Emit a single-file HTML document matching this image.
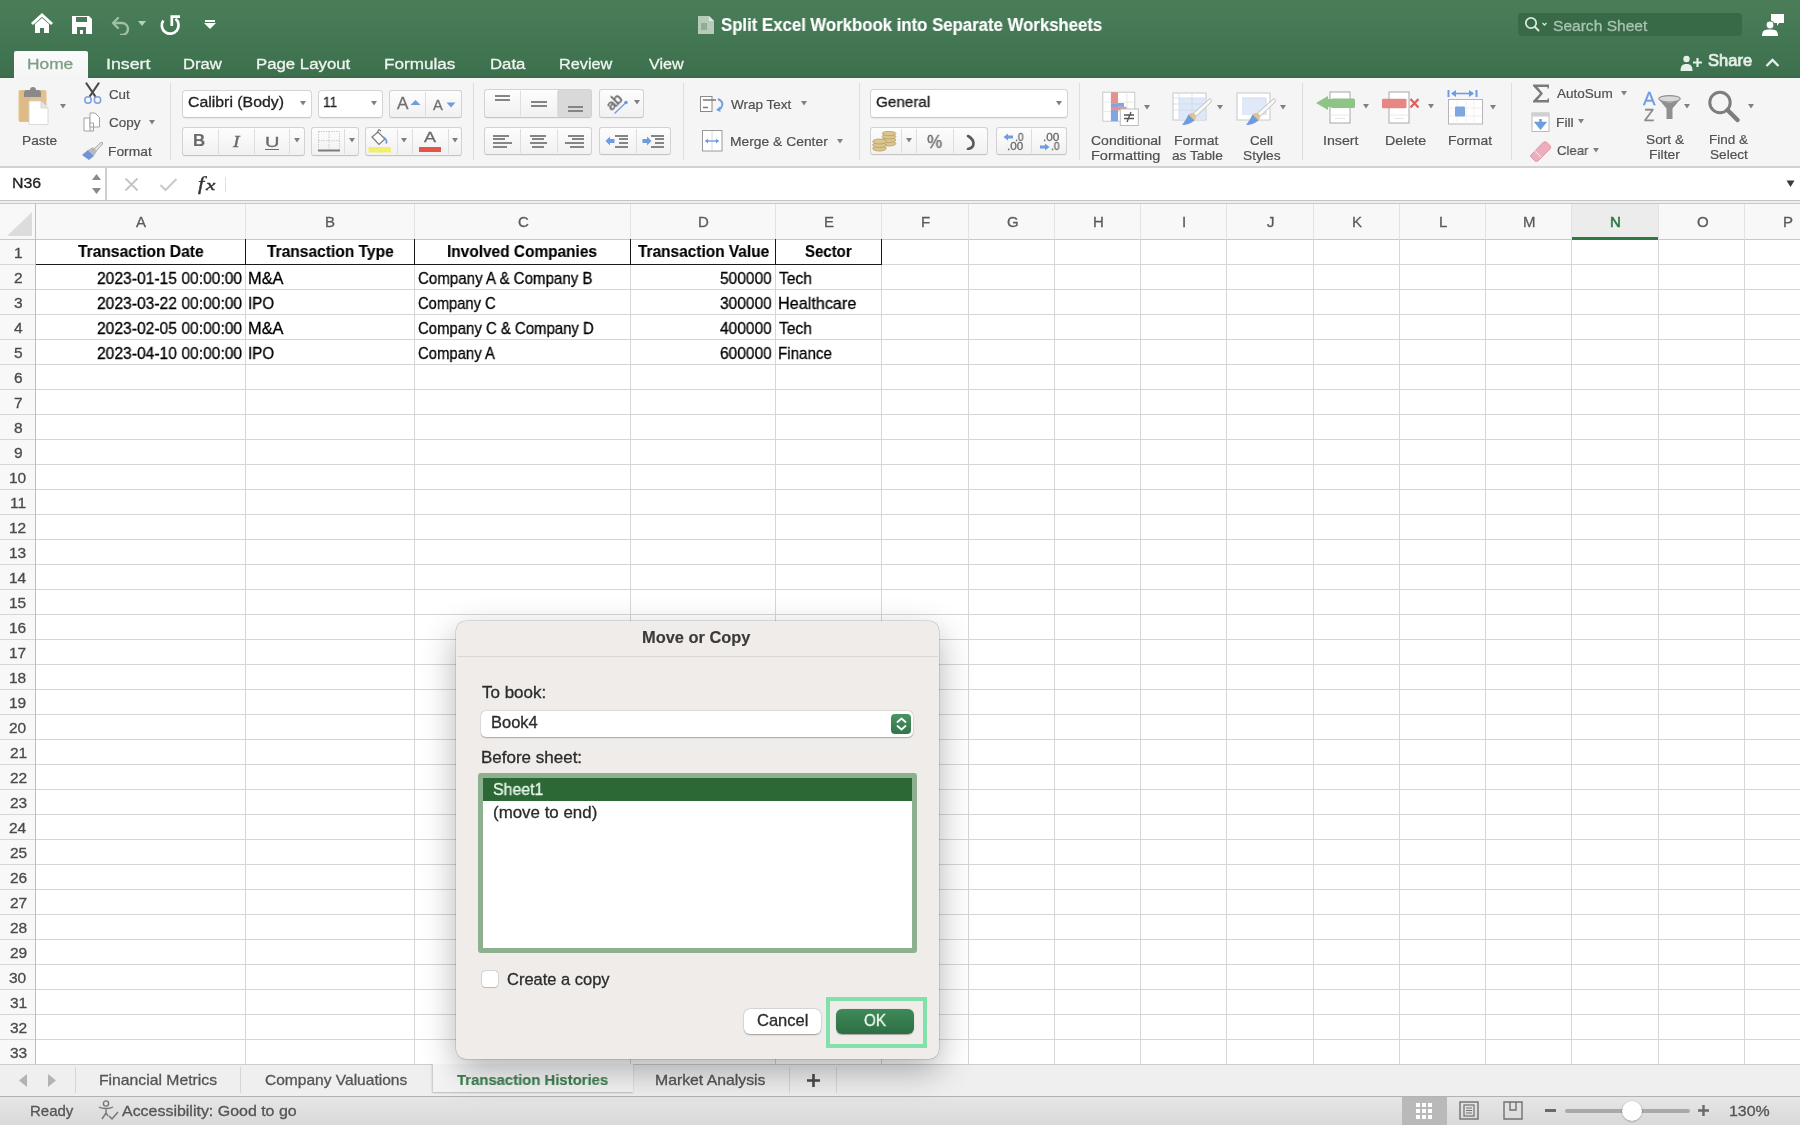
<!DOCTYPE html>
<html><head><meta charset="utf-8"><style>
html,body{margin:0;padding:0;width:1800px;height:1125px;overflow:hidden;background:#fff;font-family:"Liberation Sans",sans-serif;}
</style></head><body>
<div style="position:absolute;left:0px;top:0px;width:1800px;height:78px;background:linear-gradient(#4b7d58 0px,#457955 30px,#3d714d 74px);"></div>
<div style="position:absolute;left:0px;top:76px;width:1800px;height:2px;background:#39694a;"></div>
<svg style="position:absolute;left:30px;top:13px;" width="24" height="22" viewBox="0 0 24 22"><path d="M2 11 L12 2 L22 11" fill="none" stroke="#fff" stroke-width="3" stroke-linejoin="miter"/><path d="M5 11 L12 5 L19 11 V20 H14 V15 H10 V20 H5 Z" fill="#fff"/></svg>
<svg style="position:absolute;left:71px;top:15px;" width="22" height="20" viewBox="0 0 22 20"><path d="M1 1 H18 L21 4 V19 H1 Z" fill="#fff"/><rect x="5" y="2" width="11" height="5" fill="#487b57"/><rect x="6" y="12" width="9" height="7" fill="#487b57"/><rect x="9" y="15" width="3" height="4" fill="#fff"/></svg>
<svg style="position:absolute;left:110px;top:15px;" width="22" height="20" viewBox="0 0 22 20"><path d="M3 8 L8 3 M3 8 L8 13" stroke="#9fbfa7" stroke-width="2.4" fill="none" stroke-linecap="round"/><path d="M3 8 H12 A6 6 0 0 1 12 20 H10" stroke="#9fbfa7" stroke-width="2.4" fill="none"/></svg>
<svg style="position:absolute;left:138px;top:21px;" width="8" height="6" viewBox="0 0 8 6"><path d="M0 0 H8 L4 5 Z" fill="#b9d0bf"/></svg>
<svg style="position:absolute;left:159px;top:12px;" width="24" height="26" viewBox="0 0 24 26"><path d="M4.3 8.5 A8.4 8.4 0 1 0 16.5 6.8" stroke="#fff" stroke-width="2.7" fill="none"/><path d="M12.8 14 V4.6 H21" stroke="#fff" stroke-width="2.7" fill="none" stroke-linejoin="miter"/></svg>
<svg style="position:absolute;left:204px;top:19px;" width="12" height="11" viewBox="0 0 12 11"><rect x="1" y="1" width="10" height="2" fill="#fff"/><path d="M0 4 H12 L6 10 Z" fill="#fff"/></svg>
<svg style="position:absolute;left:697px;top:15px;" width="18" height="20" viewBox="0 0 18 20"><path d="M1 1 H12 L17 6 V19 H1 Z" fill="#b8cbbb"/><path d="M12 1 V6 H17" fill="#dfe8e0"/><rect x="4" y="8" width="6" height="7" fill="#8fae96"/></svg>
<div style="position:absolute;left:721.00px;top:15.08px;font:normal bold 17.5px 'Liberation Sans';line-height:normal;white-space:pre;will-change:transform;color:#fff;-webkit-text-stroke:0.15px #fff;transform:scaleX(0.9577);transform-origin:0 0;">Split Excel Workbook into Separate Worksheets</div>
<div style="position:absolute;left:1518px;top:13px;width:224px;height:23px;background:#386a47;border-radius:4px;"></div>
<svg style="position:absolute;left:1523px;top:15px;" width="28" height="18" viewBox="0 0 28 18"><circle cx="8" cy="8" r="5.2" stroke="#d8e6db" stroke-width="1.8" fill="none"/><path d="M11.8 11.8 L15.5 15.5" stroke="#d8e6db" stroke-width="2" stroke-linecap="round"/><path d="M19.5 8 L21.5 10 L23.5 8" stroke="#d8e6db" stroke-width="1.4" fill="none"/></svg>
<div style="position:absolute;left:1553.00px;top:16.52px;font:normal normal 15.5px 'Liberation Sans';line-height:normal;white-space:pre;will-change:transform;color:#a9c4b0;-webkit-text-stroke:0.3px #a9c4b0;transform:scaleX(1.0040);transform-origin:0 0;">Search Sheet</div>
<svg style="position:absolute;left:1761px;top:13px;" width="24" height="24" viewBox="0 0 24 24"><path d="M10 1 H23 V10 H18 L16 13 V10 H10 Z" fill="#fff"/><circle cx="9" cy="12" r="4" fill="#fff" stroke="#487b57" stroke-width="1.2"/><path d="M1 23 C1 17 4 16.5 9 16.5 C14 16.5 17 17 17 23 Z" fill="#fff"/></svg>
<div style="position:absolute;left:14px;top:51px;width:74px;height:27px;background:linear-gradient(#fbfbfb,#f5f5f5);border-radius:2px 2px 0 0;"></div>
<div style="position:absolute;left:26.88px;top:55.22px;font:normal normal 15.5px 'Liberation Sans';line-height:normal;white-space:pre;will-change:transform;color:#7c9e87;-webkit-text-stroke:0.3px #7c9e87;transform:scaleX(1.1177);transform-origin:0 0;">Home</div>
<div style="position:absolute;left:105.75px;top:55.22px;font:normal normal 15.5px 'Liberation Sans';line-height:normal;white-space:pre;will-change:transform;color:#eef5ef;-webkit-text-stroke:0.3px #eef5ef;transform:scaleX(1.1467);transform-origin:0 0;">Insert</div>
<div style="position:absolute;left:183.43px;top:55.22px;font:normal normal 15.5px 'Liberation Sans';line-height:normal;white-space:pre;will-change:transform;color:#eef5ef;-webkit-text-stroke:0.3px #eef5ef;transform:scaleX(1.0702);transform-origin:0 0;">Draw</div>
<div style="position:absolute;left:256.02px;top:55.22px;font:normal normal 15.5px 'Liberation Sans';line-height:normal;white-space:pre;will-change:transform;color:#eef5ef;-webkit-text-stroke:0.3px #eef5ef;transform:scaleX(1.0826);transform-origin:0 0;">Page Layout</div>
<div style="position:absolute;left:384.40px;top:55.22px;font:normal normal 15.5px 'Liberation Sans';line-height:normal;white-space:pre;will-change:transform;color:#eef5ef;-webkit-text-stroke:0.3px #eef5ef;transform:scaleX(1.1042);transform-origin:0 0;">Formulas</div>
<div style="position:absolute;left:489.82px;top:55.22px;font:normal normal 15.5px 'Liberation Sans';line-height:normal;white-space:pre;will-change:transform;color:#eef5ef;-webkit-text-stroke:0.3px #eef5ef;transform:scaleX(1.0803);transform-origin:0 0;">Data</div>
<div style="position:absolute;left:558.85px;top:55.22px;font:normal normal 15.5px 'Liberation Sans';line-height:normal;white-space:pre;will-change:transform;color:#eef5ef;-webkit-text-stroke:0.3px #eef5ef;transform:scaleX(1.0488);transform-origin:0 0;">Review</div>
<div style="position:absolute;left:648.50px;top:55.22px;font:normal normal 15.5px 'Liberation Sans';line-height:normal;white-space:pre;will-change:transform;color:#eef5ef;-webkit-text-stroke:0.3px #eef5ef;transform:scaleX(1.0404);transform-origin:0 0;">View</div>
<svg style="position:absolute;left:1680px;top:55px;" width="24" height="17" viewBox="0 0 24 17"><circle cx="6.5" cy="4" r="3.2" fill="#e6efe8"/><path d="M0.5 16 C0.5 10 3 9 6.5 9 C10 9 12.5 10 12.5 16 Z" fill="#e6efe8"/><path d="M13 7.5 H22 M17.5 3 V12" stroke="#e6efe8" stroke-width="2.2"/></svg>
<div style="position:absolute;left:1707.50px;top:51.96px;font:normal normal 16px 'Liberation Sans';line-height:normal;white-space:pre;will-change:transform;color:#e6efe8;-webkit-text-stroke:0.7px #e6efe8;transform:scaleX(1.0328);transform-origin:0 0;">Share</div>
<svg style="position:absolute;left:1765px;top:58px;" width="15" height="10" viewBox="0 0 15 10"><path d="M1.5 8 L7.5 2 L13.5 8" stroke="#e6efe8" stroke-width="2.4" fill="none"/></svg>
<div style="position:absolute;left:0px;top:78px;width:1800px;height:88px;background:#f5f5f5;"></div>
<div style="position:absolute;left:170px;top:83px;width:1px;height:77px;background:#dedede;"></div>
<div style="position:absolute;left:473px;top:83px;width:1px;height:77px;background:#dedede;"></div>
<div style="position:absolute;left:683px;top:83px;width:1px;height:77px;background:#dedede;"></div>
<div style="position:absolute;left:859px;top:83px;width:1px;height:77px;background:#dedede;"></div>
<div style="position:absolute;left:1079px;top:83px;width:1px;height:77px;background:#dedede;"></div>
<div style="position:absolute;left:1302px;top:83px;width:1px;height:77px;background:#dedede;"></div>
<div style="position:absolute;left:1511px;top:83px;width:1px;height:77px;background:#dedede;"></div>
<svg style="position:absolute;left:17px;top:86px;" width="32" height="40" viewBox="0 0 32 40"><rect x="1.5" y="4" width="28" height="32" rx="2" fill="#e3c18f"/><rect x="3" y="5" width="10" height="30" fill="#d9b47c" opacity="0.5"/><path d="M7 11 V7 Q7 4 10 4 H13 Q13 1 16 1 Q19 1 19 4 H21 Q24 4 24 7 V11 Z" fill="#8a8a8a"/><path d="M12 15 H24 L31 22 V38.5 H12 Z" fill="#fff" stroke="#d0d0d0" stroke-width="0.8"/><path d="M24 15 V22 H31" fill="#e6e6e6" stroke="#d0d0d0" stroke-width="0.8"/></svg>
<svg style="position:absolute;left:60.3px;top:104.2px;" width="6" height="5" viewBox="0 0 6 5"><path d="M0 0 H6 L3.0 4.5 Z" fill="#808080"/></svg>
<div style="position:absolute;left:21.97px;top:132.75px;font:normal normal 13.3px 'Liberation Sans';line-height:normal;white-space:pre;will-change:transform;color:#505050;-webkit-text-stroke:0.2px #505050;transform:scaleX(1.0335);transform-origin:0 0;">Paste</div>
<svg style="position:absolute;left:83px;top:82px;" width="19" height="22" viewBox="0 0 19 22"><path d="M3.5 1.5 L12 14 M15.5 1.5 L7 14" stroke="#4a4a4a" stroke-width="2.2" stroke-linecap="round"/><circle cx="5" cy="18" r="3.2" fill="none" stroke="#7ea0df" stroke-width="1.5"/><circle cx="14.5" cy="18" r="3.2" fill="none" stroke="#7ea0df" stroke-width="1.5"/></svg>
<div style="position:absolute;left:109.00px;top:86.55px;font:normal normal 13.3px 'Liberation Sans';line-height:normal;white-space:pre;will-change:transform;color:#505050;-webkit-text-stroke:0.2px #505050;">Cut</div>
<svg style="position:absolute;left:83px;top:112px;" width="19" height="21" viewBox="0 0 19 21"><path d="M1 6 H7 V19 H1 Z" fill="#fff" stroke="#9a9a9a" stroke-width="0.9"/><path d="M7 1 H12 L16.5 5.5 V15 H7 Z" fill="#fff" stroke="#9a9a9a" stroke-width="0.9"/><path d="M7 11 H10.5 V19 H7" fill="none" stroke="#9a9a9a" stroke-width="0.9"/></svg>
<div style="position:absolute;left:109.00px;top:115.25px;font:normal normal 13.3px 'Liberation Sans';line-height:normal;white-space:pre;will-change:transform;color:#505050;-webkit-text-stroke:0.2px #505050;transform:scaleX(1.0130);transform-origin:0 0;">Copy</div>
<svg style="position:absolute;left:149.2px;top:120.2px;" width="6" height="5" viewBox="0 0 6 5"><path d="M0 0 H6 L3.0 4.5 Z" fill="#808080"/></svg>
<svg style="position:absolute;left:81px;top:141px;" width="23" height="20" viewBox="0 0 23 20"><path d="M13 8 L20 1.5 Q22 1 21.5 3 L15 10 Z" fill="#e9e9e9" stroke="#9a9a9a" stroke-width="0.9"/><path d="M7 9 L12 6 L16 10 L13 15 Z" fill="#b9b9b9"/><path d="M1 14 L7 9 L13 15 L8 19 Z" fill="#6f95d6"/></svg>
<div style="position:absolute;left:107.96px;top:143.95px;font:normal normal 13.3px 'Liberation Sans';line-height:normal;white-space:pre;will-change:transform;color:#505050;-webkit-text-stroke:0.2px #505050;transform:scaleX(1.0382);transform-origin:0 0;">Format</div>
<div style="position:absolute;left:181.7px;top:89.7px;width:130.0px;height:28.299999999999997px;box-sizing:border-box;background:#fff;border:1px solid #d5d5d5;border-bottom-color:#c8c8c8;border-radius:4px;box-shadow:0 0.5px 1px rgba(0,0,0,0.05);"></div>
<div style="position:absolute;left:187.50px;top:93.42px;font:normal normal 15.5px 'Liberation Sans';line-height:normal;white-space:pre;will-change:transform;color:#222;-webkit-text-stroke:0.3px #222;transform:scaleX(1.0222);transform-origin:0 0;">Calibri (Body)</div>
<svg style="position:absolute;left:300.3px;top:100.5px;" width="6" height="5" viewBox="0 0 6 5"><path d="M0 0 H6 L3.0 4.5 Z" fill="#808080"/></svg>
<div style="position:absolute;left:318px;top:89.7px;width:65px;height:28.299999999999997px;box-sizing:border-box;background:#fff;border:1px solid #d5d5d5;border-bottom-color:#c8c8c8;border-radius:4px;box-shadow:0 0.5px 1px rgba(0,0,0,0.05);"></div>
<div style="position:absolute;left:323.12px;top:93.42px;font:normal normal 15.5px 'Liberation Sans';line-height:normal;white-space:pre;will-change:transform;color:#222;-webkit-text-stroke:0.3px #222;transform:scaleX(0.8777);transform-origin:0 0;">11</div>
<svg style="position:absolute;left:371.0px;top:100.5px;" width="6" height="5" viewBox="0 0 6 5"><path d="M0 0 H6 L3.0 4.5 Z" fill="#808080"/></svg>
<div style="position:absolute;left:389px;top:89.7px;width:72.69999999999999px;height:28.299999999999997px;box-sizing:border-box;background:linear-gradient(#fdfdfd,#f1f1f1);border:1px solid #d2d2d2;border-bottom-color:#c4c4c4;border-radius:3px;box-shadow:0 0.5px 0.5px rgba(0,0,0,0.06);"></div>
<div style="position:absolute;left:425px;top:91.7px;width:1px;height:24.299999999999997px;background:#dedede;"></div>
<div style="position:absolute;left:396.50px;top:94.34px;font:normal normal 17px 'Liberation Sans';line-height:normal;white-space:pre;will-change:transform;color:#707070;-webkit-text-stroke:0.3px #707070;transform:scaleX(1.0083);transform-origin:0 0;">A</div>
<svg style="position:absolute;left:410px;top:99px;" width="12" height="7" viewBox="0 0 12 7"><path d="M0.5 6 L5.5 1 L10.5 6 Z" fill="#6d9de0"/></svg>
<div style="position:absolute;left:432.80px;top:97.11px;font:normal normal 14px 'Liberation Sans';line-height:normal;white-space:pre;will-change:transform;color:#707070;-webkit-text-stroke:0.3px #707070;transform:scaleX(1.0500);transform-origin:0 0;">A</div>
<svg style="position:absolute;left:445.5px;top:101.5px;" width="11" height="6" viewBox="0 0 11 6"><path d="M0.5 0.5 L5 5.5 L9.5 0.5 Z" fill="#6d9de0"/></svg>
<div style="position:absolute;left:181.7px;top:127px;width:123.0px;height:28.5px;box-sizing:border-box;background:linear-gradient(#fdfdfd,#f1f1f1);border:1px solid #d2d2d2;border-bottom-color:#c4c4c4;border-radius:3px;box-shadow:0 0.5px 0.5px rgba(0,0,0,0.06);"></div>
<div style="position:absolute;left:218px;top:129px;width:1px;height:24.5px;background:#dedede;"></div>
<div style="position:absolute;left:254px;top:129px;width:1px;height:24.5px;background:#dedede;"></div>
<div style="position:absolute;left:289px;top:129px;width:1px;height:24.5px;background:#dedede;"></div>
<div style="position:absolute;left:193.25px;top:132.26px;font:normal bold 16px 'Liberation Sans';line-height:normal;white-space:pre;will-change:transform;color:#6a6a6a;-webkit-text-stroke:0.15px #6a6a6a;transform:scaleX(1.0500);transform-origin:0 0;">B</div>
<div style="position:absolute;left:232.60px;top:131.80px;font:italic normal 16.5px 'Liberation Serif';line-height:normal;white-space:pre;will-change:transform;color:#6a6a6a;-webkit-text-stroke:0.3px #6a6a6a;transform:scaleX(1.2000);transform-origin:0 0;">I</div>
<div style="position:absolute;left:264.67px;top:133.19px;font:normal normal 15px 'Liberation Sans';line-height:normal;white-space:pre;will-change:transform;color:#6a6a6a;-webkit-text-stroke:0.3px #6a6a6a;transform:scaleX(1.3333);transform-origin:0 0;">U</div>
<div style="position:absolute;left:265px;top:148.5px;width:14px;height:1.3px;background:#6a6a6a;"></div>
<svg style="position:absolute;left:293.6px;top:138.1px;" width="6" height="5" viewBox="0 0 6 5"><path d="M0 0 H6 L3.0 4.5 Z" fill="#808080"/></svg>
<div style="position:absolute;left:311px;top:127px;width:48px;height:28.5px;box-sizing:border-box;background:linear-gradient(#fdfdfd,#f1f1f1);border:1px solid #d2d2d2;border-bottom-color:#c4c4c4;border-radius:3px;box-shadow:0 0.5px 0.5px rgba(0,0,0,0.06);"></div>
<div style="position:absolute;left:344px;top:129px;width:1px;height:24.5px;background:#dedede;"></div>
<svg style="position:absolute;left:317px;top:130px;" width="24" height="23" viewBox="0 0 24 23"><path d="M1.5 1.5 H22.5 V20 M1.5 1.5 V20 M12 1.5 V20 M1.5 10.7 H22.5" stroke="#c6c6c6" stroke-width="0.9" stroke-dasharray="1.5 1" fill="none"/><rect x="1" y="19.5" width="22" height="2" fill="#7d7d7d"/></svg>
<svg style="position:absolute;left:349.0px;top:138.1px;" width="6" height="5" viewBox="0 0 6 5"><path d="M0 0 H6 L3.0 4.5 Z" fill="#808080"/></svg>
<div style="position:absolute;left:365px;top:127px;width:96.69999999999999px;height:28.5px;box-sizing:border-box;background:linear-gradient(#fdfdfd,#f1f1f1);border:1px solid #d2d2d2;border-bottom-color:#c4c4c4;border-radius:3px;box-shadow:0 0.5px 0.5px rgba(0,0,0,0.06);"></div>
<div style="position:absolute;left:396.7px;top:129px;width:1px;height:24.5px;background:#dedede;"></div>
<div style="position:absolute;left:411.7px;top:129px;width:1px;height:24.5px;background:#dedede;"></div>
<div style="position:absolute;left:447.5px;top:129px;width:1px;height:24.5px;background:#dedede;"></div>
<svg style="position:absolute;left:368px;top:128px;" width="23" height="26" viewBox="0 0 23 26"><path d="M4 9 L10 4 L17 11 L11 16.5 Z" fill="#fff" stroke="#7a7a7a" stroke-width="1.2"/><path d="M9 5 L11 1.5 L13 3" fill="none" stroke="#7a7a7a" stroke-width="1.1"/><path d="M15 9 Q20 12 18 15.5" fill="none" stroke="#6d9de0" stroke-width="1.8"/><rect x="0.5" y="19" width="22.5" height="5.5" fill="#f3ef6c"/></svg>
<svg style="position:absolute;left:401.3px;top:138.1px;" width="6" height="5" viewBox="0 0 6 5"><path d="M0 0 H6 L3.0 4.5 Z" fill="#808080"/></svg>
<div style="position:absolute;left:424.00px;top:128.19px;font:normal normal 15px 'Liberation Sans';line-height:normal;white-space:pre;will-change:transform;color:#6a6a6a;-webkit-text-stroke:0.3px #6a6a6a;transform:scaleX(1.2000);transform-origin:0 0;">A</div>
<div style="position:absolute;left:418.6px;top:147px;width:22.2px;height:5px;background:#e6534b;"></div>
<svg style="position:absolute;left:451.5px;top:138.1px;" width="6" height="5" viewBox="0 0 6 5"><path d="M0 0 H6 L3.0 4.5 Z" fill="#808080"/></svg>
<div style="position:absolute;left:484.4px;top:89.4px;width:107.80000000000007px;height:28.39999999999999px;box-sizing:border-box;background:linear-gradient(#fdfdfd,#f1f1f1);border:1px solid #d2d2d2;border-bottom-color:#c4c4c4;border-radius:3px;box-shadow:0 0.5px 0.5px rgba(0,0,0,0.06);"></div>
<div style="position:absolute;left:557.7px;top:90.4px;width:33.5px;height:26.39999999999999px;background:#d9d9d9;"></div>
<div style="position:absolute;left:520.2px;top:91.4px;width:1px;height:24.39999999999999px;background:#dedede;"></div>
<div style="position:absolute;left:557.2px;top:91.4px;width:1px;height:24.39999999999999px;background:#dedede;"></div>
<div style="position:absolute;left:495px;top:95px;width:15px;height:2px;background:#858585;"></div>
<div style="position:absolute;left:495px;top:99px;width:15px;height:2px;background:#858585;"></div>
<div style="position:absolute;left:531px;top:101px;width:16px;height:2px;background:#858585;"></div>
<div style="position:absolute;left:531px;top:105px;width:16px;height:2px;background:#858585;"></div>
<div style="position:absolute;left:568px;top:106px;width:15px;height:2px;background:#858585;"></div>
<div style="position:absolute;left:568px;top:110px;width:15px;height:2px;background:#858585;"></div>
<div style="position:absolute;left:599.4px;top:89.4px;width:44.5px;height:28.39999999999999px;box-sizing:border-box;background:linear-gradient(#fdfdfd,#f1f1f1);border:1px solid #d2d2d2;border-bottom-color:#c4c4c4;border-radius:3px;box-shadow:0 0.5px 0.5px rgba(0,0,0,0.06);"></div>
<div style="position:absolute;left:605px;top:92px;width:22px;height:16px;font:normal 15px 'Liberation Sans';color:#6a6a6a;-webkit-text-stroke:0.5px #6a6a6a;will-change:transform;transform:rotate(-45deg);transform-origin:50% 50%;line-height:16px;">ab</div>
<svg style="position:absolute;left:613px;top:100px;" width="16" height="15" viewBox="0 0 16 15"><path d="M1.5 13.5 L13 2.5" stroke="#6d9de0" stroke-width="1.3"/><circle cx="13" cy="2.5" r="1.8" fill="#6d9de0"/></svg>
<svg style="position:absolute;left:633.7px;top:100.3px;" width="6" height="5" viewBox="0 0 6 5"><path d="M0 0 H6 L3.0 4.5 Z" fill="#808080"/></svg>
<div style="position:absolute;left:484.4px;top:127.2px;width:107.80000000000007px;height:27.999999999999986px;box-sizing:border-box;background:linear-gradient(#fdfdfd,#f1f1f1);border:1px solid #d2d2d2;border-bottom-color:#c4c4c4;border-radius:3px;box-shadow:0 0.5px 0.5px rgba(0,0,0,0.06);"></div>
<div style="position:absolute;left:520.2px;top:129.2px;width:1px;height:23.999999999999986px;background:#dedede;"></div>
<div style="position:absolute;left:557.2px;top:129.2px;width:1px;height:23.999999999999986px;background:#dedede;"></div>
<div style="position:absolute;left:493px;top:135px;width:16px;height:2px;background:#858585;"></div>
<div style="position:absolute;left:493px;top:138px;width:12px;height:2px;background:#858585;"></div>
<div style="position:absolute;left:493px;top:142px;width:19px;height:2px;background:#858585;"></div>
<div style="position:absolute;left:493px;top:146px;width:14px;height:2px;background:#858585;"></div>
<div style="position:absolute;left:530px;top:135px;width:16px;height:2px;background:#858585;"></div>
<div style="position:absolute;left:532px;top:138px;width:12px;height:2px;background:#858585;"></div>
<div style="position:absolute;left:530px;top:142px;width:17px;height:2px;background:#858585;"></div>
<div style="position:absolute;left:532px;top:146px;width:12px;height:2px;background:#858585;"></div>
<div style="position:absolute;left:568px;top:135px;width:16px;height:2px;background:#858585;"></div>
<div style="position:absolute;left:572px;top:138px;width:12px;height:2px;background:#858585;"></div>
<div style="position:absolute;left:565px;top:142px;width:19px;height:2px;background:#858585;"></div>
<div style="position:absolute;left:570px;top:146px;width:14px;height:2px;background:#858585;"></div>
<div style="position:absolute;left:599.4px;top:127.2px;width:71.70000000000005px;height:27.999999999999986px;box-sizing:border-box;background:linear-gradient(#fdfdfd,#f1f1f1);border:1px solid #d2d2d2;border-bottom-color:#c4c4c4;border-radius:3px;box-shadow:0 0.5px 0.5px rgba(0,0,0,0.06);"></div>
<div style="position:absolute;left:635.6px;top:129.2px;width:1px;height:23.999999999999986px;background:#dedede;"></div>
<svg style="position:absolute;left:605px;top:136px;" width="10" height="10" viewBox="0 0 10 10"><path d="M0.5 5 L5 0.5 V3 H9.5 V7 H5 V9.5 Z" fill="#6d9de0"/></svg>
<div style="position:absolute;left:615px;top:135px;width:13px;height:2px;background:#858585;"></div>
<div style="position:absolute;left:619px;top:138px;width:9px;height:2px;background:#858585;"></div>
<div style="position:absolute;left:619px;top:142px;width:9px;height:2px;background:#858585;"></div>
<div style="position:absolute;left:615px;top:146px;width:13px;height:2px;background:#858585;"></div>
<svg style="position:absolute;left:642px;top:136px;" width="10" height="10" viewBox="0 0 10 10"><path d="M9.5 5 L5 0.5 V3 H0.5 V7 H5 V9.5 Z" fill="#6d9de0"/></svg>
<div style="position:absolute;left:651px;top:135px;width:13px;height:2px;background:#858585;"></div>
<div style="position:absolute;left:655px;top:138px;width:9px;height:2px;background:#858585;"></div>
<div style="position:absolute;left:655px;top:142px;width:9px;height:2px;background:#858585;"></div>
<div style="position:absolute;left:651px;top:146px;width:13px;height:2px;background:#858585;"></div>
<svg style="position:absolute;left:699px;top:95px;" width="28" height="18" viewBox="0 0 28 18"><rect x="1.5" y="1.5" width="11.5" height="15" fill="#fff" stroke="#8a8a8a" stroke-width="1"/><path d="M4 5 H17 M4 12.5 H9" stroke="#7a7a7a" stroke-width="1.3"/><path d="M19 4 Q26 7 22 13 L19 15" fill="none" stroke="#6d9de0" stroke-width="2"/><path d="M17 15 L21 11.5 L21.5 17 Z" fill="#6d9de0"/></svg>
<div style="position:absolute;left:730.90px;top:96.65px;font:normal normal 13.3px 'Liberation Sans';line-height:normal;white-space:pre;will-change:transform;color:#505050;-webkit-text-stroke:0.2px #505050;transform:scaleX(1.0165);transform-origin:0 0;">Wrap Text</div>
<svg style="position:absolute;left:801.0px;top:100.8px;" width="6" height="5" viewBox="0 0 6 5"><path d="M0 0 H6 L3.0 4.5 Z" fill="#808080"/></svg>
<svg style="position:absolute;left:701px;top:129px;" width="22" height="23" viewBox="0 0 22 23"><rect x="1.5" y="1.5" width="19.5" height="20.5" fill="#fff" stroke="#9a9a9a" stroke-width="1"/><path d="M11 2 V21" stroke="#dcdcdc" stroke-width="1"/><path d="M4.5 12 H17.5" stroke="#6d9de0" stroke-width="1.4"/><path d="M4 12 L7 9.5 V14.5 Z M18 12 L15 9.5 V14.5 Z" fill="#6d9de0"/></svg>
<div style="position:absolute;left:729.86px;top:133.55px;font:normal normal 13.3px 'Liberation Sans';line-height:normal;white-space:pre;will-change:transform;color:#505050;-webkit-text-stroke:0.2px #505050;transform:scaleX(1.0414);transform-origin:0 0;">Merge &amp; Center</div>
<svg style="position:absolute;left:837.0px;top:138.5px;" width="6" height="5" viewBox="0 0 6 5"><path d="M0 0 H6 L3.0 4.5 Z" fill="#808080"/></svg>
<div style="position:absolute;left:869.8px;top:89px;width:198.0px;height:28.599999999999994px;box-sizing:border-box;background:#fff;border:1px solid #d5d5d5;border-bottom-color:#c8c8c8;border-radius:4px;box-shadow:0 0.5px 1px rgba(0,0,0,0.05);"></div>
<div style="position:absolute;left:875.90px;top:93.22px;font:normal normal 15.5px 'Liberation Sans';line-height:normal;white-space:pre;will-change:transform;color:#222;-webkit-text-stroke:0.3px #222;transform:scaleX(0.9836);transform-origin:0 0;">General</div>
<svg style="position:absolute;left:1055.5px;top:100.5px;" width="6" height="5" viewBox="0 0 6 5"><path d="M0 0 H6 L3.0 4.5 Z" fill="#808080"/></svg>
<div style="position:absolute;left:870.3px;top:127.2px;width:117.80000000000007px;height:27.799999999999997px;box-sizing:border-box;background:linear-gradient(#fdfdfd,#f1f1f1);border:1px solid #d2d2d2;border-bottom-color:#c4c4c4;border-radius:3px;box-shadow:0 0.5px 0.5px rgba(0,0,0,0.06);"></div>
<div style="position:absolute;left:900.6px;top:129.2px;width:1px;height:23.799999999999997px;background:#dedede;"></div>
<div style="position:absolute;left:915.8px;top:129.2px;width:1px;height:23.799999999999997px;background:#dedede;"></div>
<div style="position:absolute;left:952.5px;top:129.2px;width:1px;height:23.799999999999997px;background:#dedede;"></div>
<svg style="position:absolute;left:871px;top:131px;" width="27" height="22" viewBox="0 0 27 22"><g fill="#dcc68f" stroke="#b59d5f" stroke-width="0.8"><ellipse cx="18" cy="12.5" rx="6.8" ry="2.5"/><ellipse cx="18" cy="9" rx="6.8" ry="2.5"/><ellipse cx="18" cy="5.5" rx="6.8" ry="2.5"/><ellipse cx="18" cy="2.5" rx="6.8" ry="2.2"/><ellipse cx="8.5" cy="17.5" rx="6.8" ry="2.5"/><ellipse cx="8.5" cy="14" rx="6.8" ry="2.5"/><ellipse cx="8.5" cy="10.5" rx="6.8" ry="2.5"/></g></svg>
<svg style="position:absolute;left:905.8px;top:137.9px;" width="6" height="5" viewBox="0 0 6 5"><path d="M0 0 H6 L3.0 4.5 Z" fill="#808080"/></svg>
<div style="position:absolute;left:926.80px;top:132.02px;font:normal normal 18px 'Liberation Sans';line-height:normal;white-space:pre;will-change:transform;color:#6a6a6a;-webkit-text-stroke:0.3px #6a6a6a;transform:scaleX(0.9500);transform-origin:0 0;">%</div>
<svg style="position:absolute;left:964px;top:134px;" width="13" height="16" viewBox="0 0 13 16"><path d="M4 2 Q11 6 9 12 Q7.5 14.5 4 15" fill="none" stroke="#5a5a5a" stroke-width="2.6" stroke-linecap="round"/></svg>
<div style="position:absolute;left:995.7px;top:127.2px;width:71.79999999999995px;height:27.799999999999997px;box-sizing:border-box;background:linear-gradient(#fdfdfd,#f1f1f1);border:1px solid #d2d2d2;border-bottom-color:#c4c4c4;border-radius:3px;box-shadow:0 0.5px 0.5px rgba(0,0,0,0.06);"></div>
<div style="position:absolute;left:1031.3px;top:129.2px;width:1px;height:23.799999999999997px;background:#dedede;"></div>
<svg style="position:absolute;left:1003px;top:133px;" width="11" height="8" viewBox="0 0 11 8"><path d="M0.5 4 L5 0.5 V2.5 H10 V5.5 H5 V7.5 Z" fill="#6d9de0"/></svg>
<div style="position:absolute;left:1014.56px;top:131.37px;font:normal normal 11px 'Liberation Sans';line-height:normal;white-space:pre;will-change:transform;color:#6a6a6a;-webkit-text-stroke:0.3px #6a6a6a;transform:scaleX(0.9434);transform-origin:0 0;">.0</div>
<div style="position:absolute;left:1006.93px;top:139.67px;font:normal normal 11px 'Liberation Sans';line-height:normal;white-space:pre;will-change:transform;color:#6a6a6a;-webkit-text-stroke:0.3px #6a6a6a;transform:scaleX(1.0653);transform-origin:0 0;">.00</div>
<div style="position:absolute;left:1043.03px;top:131.37px;font:normal normal 11px 'Liberation Sans';line-height:normal;white-space:pre;will-change:transform;color:#6a6a6a;-webkit-text-stroke:0.3px #6a6a6a;transform:scaleX(1.0724);transform-origin:0 0;">.00</div>
<svg style="position:absolute;left:1038.5px;top:142.5px;" width="11" height="8" viewBox="0 0 11 8"><path d="M10.5 4 L6 0.5 V2.5 H1 V5.5 H6 V7.5 Z" fill="#6d9de0"/></svg>
<div style="position:absolute;left:1050.76px;top:139.67px;font:normal normal 11px 'Liberation Sans';line-height:normal;white-space:pre;will-change:transform;color:#6a6a6a;-webkit-text-stroke:0.3px #6a6a6a;transform:scaleX(0.9434);transform-origin:0 0;">.0</div>
<svg style="position:absolute;left:1101px;top:90px;" width="40" height="37" viewBox="0 0 40 37"><rect x="1.8" y="2.2" width="32" height="29" fill="#fff" stroke="#c8c8c8" stroke-width="1"/><path d="M1.8 12 H33.8 M1.8 21.5 H33.8 M10 2.2 V31 M26 2.2 V31" stroke="#e3e3e3" stroke-width="0.8"/><rect x="10" y="2.2" width="7" height="11" fill="#e8908d"/><rect x="10" y="13.2" width="7" height="18" fill="#7fa6e2"/><rect x="17" y="13" width="6" height="3.8" fill="#7fa6e2"/><rect x="10" y="16.8" width="15.5" height="3.5" fill="#e8908d"/><rect x="19.3" y="19" width="18" height="16.5" fill="#fff" stroke="#bdbdbd" stroke-width="1"/><path d="M23 25 H33 M23 28.5 H33 M30 22 L26 32" stroke="#555" stroke-width="1.3"/></svg>
<svg style="position:absolute;left:1144.2px;top:104.8px;" width="6" height="5" viewBox="0 0 6 5"><path d="M0 0 H6 L3.0 4.5 Z" fill="#808080"/></svg>
<div style="position:absolute;left:1091.00px;top:132.95px;font:normal normal 13.3px 'Liberation Sans';line-height:normal;white-space:pre;will-change:transform;color:#505050;-webkit-text-stroke:0.2px #505050;transform:scaleX(1.0544);transform-origin:0 0;">Conditional</div>
<div style="position:absolute;left:1091.21px;top:147.65px;font:normal normal 13.3px 'Liberation Sans';line-height:normal;white-space:pre;will-change:transform;color:#505050;-webkit-text-stroke:0.2px #505050;transform:scaleX(1.0924);transform-origin:0 0;">Formatting</div>
<svg style="position:absolute;left:1172px;top:92px;" width="42" height="34" viewBox="0 0 42 34"><rect x="1" y="1" width="33" height="27" fill="#fff" stroke="#c8c8c8" stroke-width="1"/><rect x="7" y="6" width="26" height="21" fill="#dde8f8"/><path d="M1 6 H34 M1 12 H34 M1 18 H34 M7 1 V28 M20 1 V28" stroke="#cfd8e6" stroke-width="0.7"/><path d="M38 6.5 Q40.5 8 39 10 L23.5 25 L20.5 22 Z" fill="#fafafa" stroke="#b5b5b5" stroke-width="0.9"/><circle cx="20" cy="25" r="4" fill="#e3c38b"/><path d="M16.5 22.5 L22.5 28.5 Q17 33 10 33 Q14 28 16.5 22.5 Z" fill="#6d9de0"/></svg>
<svg style="position:absolute;left:1216.5px;top:104.8px;" width="6" height="5" viewBox="0 0 6 5"><path d="M0 0 H6 L3.0 4.5 Z" fill="#808080"/></svg>
<div style="position:absolute;left:1174.35px;top:132.95px;font:normal normal 13.3px 'Liberation Sans';line-height:normal;white-space:pre;will-change:transform;color:#505050;-webkit-text-stroke:0.2px #505050;transform:scaleX(1.0527);transform-origin:0 0;">Format</div>
<div style="position:absolute;left:1171.70px;top:147.65px;font:normal normal 13.3px 'Liberation Sans';line-height:normal;white-space:pre;will-change:transform;color:#505050;-webkit-text-stroke:0.2px #505050;transform:scaleX(1.0299);transform-origin:0 0;">as Table</div>
<svg style="position:absolute;left:1236px;top:92px;" width="42" height="34" viewBox="0 0 42 34"><rect x="1" y="1" width="33" height="27" fill="#fff" stroke="#c8c8c8" stroke-width="1"/><rect x="6" y="6" width="24" height="17" fill="#dfe9f8"/><path d="M6 6 H30 V23" stroke="#c9d3e2" stroke-width="0.8" fill="none"/><path d="M38 6.5 Q40.5 8 39 10 L23.5 25 L20.5 22 Z" fill="#fafafa" stroke="#b5b5b5" stroke-width="0.9"/><circle cx="20" cy="25" r="4" fill="#e3c38b"/><path d="M16.5 22.5 L22.5 28.5 Q17 33 10 33 Q14 28 16.5 22.5 Z" fill="#6d9de0"/></svg>
<svg style="position:absolute;left:1280.1px;top:104.8px;" width="6" height="5" viewBox="0 0 6 5"><path d="M0 0 H6 L3.0 4.5 Z" fill="#808080"/></svg>
<div style="position:absolute;left:1250.00px;top:132.95px;font:normal normal 13.3px 'Liberation Sans';line-height:normal;white-space:pre;will-change:transform;color:#505050;-webkit-text-stroke:0.2px #505050;">Cell</div>
<div style="position:absolute;left:1242.60px;top:147.65px;font:normal normal 13.3px 'Liberation Sans';line-height:normal;white-space:pre;will-change:transform;color:#505050;-webkit-text-stroke:0.2px #505050;transform:scaleX(1.0366);transform-origin:0 0;">Styles</div>
<svg style="position:absolute;left:1329px;top:91px;" width="22" height="33" viewBox="0 0 22 33"><rect x="1" y="1" width="20" height="31" fill="#fff" stroke="#a8a8a8" stroke-width="1"/><path d="M1 9 H21 M1 24 H21" stroke="#e4e4e4" stroke-width="0.8"/><path d="M6 27.5 H16" stroke="#e0e0e0" stroke-width="0.8"/></svg>
<svg style="position:absolute;left:1315px;top:95px;" width="41" height="16" viewBox="0 0 41 16"><rect x="16" y="3.5" width="24" height="9.5" rx="1.5" fill="#8ec486"/><path d="M1 8 L13 1 V15 Z" fill="#8ec486"/><rect x="12" y="4" width="5" height="8" fill="#8ec486"/></svg>
<svg style="position:absolute;left:1362.6px;top:103.9px;" width="6" height="5" viewBox="0 0 6 5"><path d="M0 0 H6 L3.0 4.5 Z" fill="#808080"/></svg>
<div style="position:absolute;left:1322.93px;top:132.75px;font:normal normal 13.3px 'Liberation Sans';line-height:normal;white-space:pre;will-change:transform;color:#505050;-webkit-text-stroke:0.2px #505050;transform:scaleX(1.0688);transform-origin:0 0;">Insert</div>
<svg style="position:absolute;left:1387.5px;top:91px;" width="22" height="33" viewBox="0 0 22 33"><rect x="1" y="1" width="20" height="31" fill="#fff" stroke="#a8a8a8" stroke-width="1"/><path d="M1 9 H21 M1 24 H21" stroke="#e4e4e4" stroke-width="0.8"/><path d="M6 27.5 H16" stroke="#e0e0e0" stroke-width="0.8"/></svg>
<svg style="position:absolute;left:1381px;top:98px;" width="41" height="11" viewBox="0 0 41 11"><rect x="1" y="0.7" width="24.5" height="9.5" rx="1" fill="#e78785"/><path d="M29.5 1 L37.5 9.5 M37.5 1 L29.5 9.5" stroke="#e0605b" stroke-width="2.3"/></svg>
<svg style="position:absolute;left:1427.6px;top:103.9px;" width="6" height="5" viewBox="0 0 6 5"><path d="M0 0 H6 L3.0 4.5 Z" fill="#808080"/></svg>
<div style="position:absolute;left:1385.23px;top:132.75px;font:normal normal 13.3px 'Liberation Sans';line-height:normal;white-space:pre;will-change:transform;color:#505050;-webkit-text-stroke:0.2px #505050;transform:scaleX(1.0718);transform-origin:0 0;">Delete</div>
<svg style="position:absolute;left:1446px;top:88px;" width="38" height="38" viewBox="0 0 38 38"><path d="M2.5 2 V9 M30.5 2 V9" stroke="#6d9de0" stroke-width="2"/><path d="M6 5.5 H27" stroke="#6d9de0" stroke-width="1.6"/><path d="M5 5.5 L10 2 V9 Z M28 5.5 L23 2 V9 Z" fill="#6d9de0"/><rect x="2.5" y="11.5" width="34" height="24.5" fill="#fff" stroke="#b5b5b5" stroke-width="1"/><path d="M11 12 V36 M20 12 V36 M28 12 V36 M3 20 H36 M3 28 H36" stroke="#ececec" stroke-width="0.8"/><rect x="9" y="18.5" width="10" height="10" rx="1" fill="#7ea6e0"/></svg>
<svg style="position:absolute;left:1489.8px;top:104.5px;" width="6" height="5" viewBox="0 0 6 5"><path d="M0 0 H6 L3.0 4.5 Z" fill="#808080"/></svg>
<div style="position:absolute;left:1448.15px;top:132.75px;font:normal normal 13.3px 'Liberation Sans';line-height:normal;white-space:pre;will-change:transform;color:#505050;-webkit-text-stroke:0.2px #505050;transform:scaleX(1.0455);transform-origin:0 0;">Format</div>
<svg style="position:absolute;left:1531px;top:83px;" width="20" height="21" viewBox="0 0 20 21"><path d="M2 1.5 H18 V5.5 H16.5 V4 H6.5 L12 10.5 L6.5 17 H16.5 V15.5 H18 V19.5 H2 V18 L9 10.5 L2 3 Z" fill="#7a7a7a"/></svg>
<div style="position:absolute;left:1556.80px;top:86.05px;font:normal normal 13.3px 'Liberation Sans';line-height:normal;white-space:pre;will-change:transform;color:#505050;-webkit-text-stroke:0.2px #505050;transform:scaleX(1.0180);transform-origin:0 0;">AutoSum</div>
<svg style="position:absolute;left:1620.5px;top:90.7px;" width="6" height="5" viewBox="0 0 6 5"><path d="M0 0 H6 L3.0 4.5 Z" fill="#808080"/></svg>
<svg style="position:absolute;left:1531px;top:112px;" width="19" height="20" viewBox="0 0 19 20"><rect x="1" y="1" width="17" height="18.5" fill="#fff" stroke="#b9b9b9" stroke-width="1"/><rect x="1" y="1" width="17" height="3.5" fill="#cfcfcf"/><path d="M9.5 7 V12 M5.5 11 L9.5 16 L13.5 11 Z" stroke="#6d9de0" stroke-width="2.6" fill="#6d9de0"/></svg>
<div style="position:absolute;left:1555.76px;top:114.95px;font:normal normal 13.3px 'Liberation Sans';line-height:normal;white-space:pre;will-change:transform;color:#505050;-webkit-text-stroke:0.2px #505050;transform:scaleX(1.0418);transform-origin:0 0;">Fill</div>
<svg style="position:absolute;left:1578.1px;top:119.2px;" width="6" height="5" viewBox="0 0 6 5"><path d="M0 0 H6 L3.0 4.5 Z" fill="#808080"/></svg>
<svg style="position:absolute;left:1529px;top:140px;" width="23" height="22" viewBox="0 0 23 22"><path d="M2 15 L14 2.5 Q16 1 18 2.5 L21 5.5 Q22.5 7.5 21 9 L9 21 Q7.5 22 6 21 L2 17 Q1 16 2 15 Z" fill="#ecadbd" stroke="#d98b9e" stroke-width="0.8"/><path d="M6 11 L12 17" stroke="#f8d8e0" stroke-width="1.2"/></svg>
<div style="position:absolute;left:1556.80px;top:143.45px;font:normal normal 13.3px 'Liberation Sans';line-height:normal;white-space:pre;will-change:transform;color:#505050;-webkit-text-stroke:0.2px #505050;transform:scaleX(0.9893);transform-origin:0 0;">Clear</div>
<svg style="position:absolute;left:1593.4px;top:148.3px;" width="6" height="5" viewBox="0 0 6 5"><path d="M0 0 H6 L3.0 4.5 Z" fill="#808080"/></svg>
<div style="position:absolute;left:1642.90px;top:89.12px;font:normal normal 18px 'Liberation Sans';line-height:normal;white-space:pre;will-change:transform;color:#6d9de0;-webkit-text-stroke:0.3px #6d9de0;transform:scaleX(1.0417);transform-origin:0 0;">A</div>
<div style="position:absolute;left:1644.30px;top:106.96px;font:normal normal 16px 'Liberation Sans';line-height:normal;white-space:pre;will-change:transform;color:#8a8a8a;-webkit-text-stroke:0.3px #8a8a8a;transform:scaleX(1.0400);transform-origin:0 0;">Z</div>
<svg style="position:absolute;left:1658px;top:95px;" width="24" height="26" viewBox="0 0 24 26"><ellipse cx="11.5" cy="3.8" rx="10.7" ry="3.2" fill="#d9d9d9" stroke="#8f8f8f" stroke-width="1.1"/><path d="M1 4 Q2 6 8.5 13.5 V24 H14.5 V13.5 Q21 6 22 4 Q18 7.5 11.5 7.5 Q5 7.5 1 4 Z" fill="#8f8f8f"/></svg>
<svg style="position:absolute;left:1684.4px;top:103.9px;" width="6" height="5" viewBox="0 0 6 5"><path d="M0 0 H6 L3.0 4.5 Z" fill="#808080"/></svg>
<div style="position:absolute;left:1646.40px;top:132.35px;font:normal normal 13.3px 'Liberation Sans';line-height:normal;white-space:pre;will-change:transform;color:#505050;-webkit-text-stroke:0.2px #505050;transform:scaleX(1.0302);transform-origin:0 0;">Sort &amp;</div>
<div style="position:absolute;left:1648.85px;top:146.95px;font:normal normal 13.3px 'Liberation Sans';line-height:normal;white-space:pre;will-change:transform;color:#505050;-webkit-text-stroke:0.2px #505050;transform:scaleX(1.0474);transform-origin:0 0;">Filter</div>
<svg style="position:absolute;left:1706px;top:89px;" width="36" height="36" viewBox="0 0 36 36"><circle cx="14" cy="13.5" r="10.2" fill="none" stroke="#7d7d7d" stroke-width="3"/><path d="M21.5 21 L31.5 31" stroke="#7d7d7d" stroke-width="4.5" stroke-linecap="round"/></svg>
<svg style="position:absolute;left:1748.2px;top:103.9px;" width="6" height="5" viewBox="0 0 6 5"><path d="M0 0 H6 L3.0 4.5 Z" fill="#808080"/></svg>
<div style="position:absolute;left:1709.28px;top:132.35px;font:normal normal 13.3px 'Liberation Sans';line-height:normal;white-space:pre;will-change:transform;color:#505050;-webkit-text-stroke:0.2px #505050;transform:scaleX(1.0170);transform-origin:0 0;">Find &amp;</div>
<div style="position:absolute;left:1710.30px;top:146.95px;font:normal normal 13.3px 'Liberation Sans';line-height:normal;white-space:pre;will-change:transform;color:#505050;-webkit-text-stroke:0.2px #505050;transform:scaleX(1.0252);transform-origin:0 0;">Select</div>
<div style="position:absolute;left:0px;top:166px;width:1800px;height:38px;background:#ffffff;"></div>
<div style="position:absolute;left:0px;top:166px;width:1800px;height:2px;background:#d2d2d2;"></div>
<div style="position:absolute;left:0px;top:200px;width:1800px;height:1px;background:#c4c4c4;"></div>
<div style="position:absolute;left:0px;top:201px;width:1800px;height:2px;background:#efefef;"></div>
<div style="position:absolute;left:0px;top:203px;width:1800px;height:1px;background:#c9c9c9;"></div>
<div style="position:absolute;left:105px;top:168px;width:2px;height:32px;background:#cdcdcd;"></div>
<div style="position:absolute;left:12.27px;top:174.42px;font:normal normal 15.5px 'Liberation Sans';line-height:normal;white-space:pre;will-change:transform;color:#222;-webkit-text-stroke:0.3px #222;transform:scaleX(1.0256);transform-origin:0 0;">N36</div>
<svg style="position:absolute;left:91px;top:173px;" width="11" height="23" viewBox="0 0 11 23"><path d="M1 7 L5.5 1 L10 7 Z M1 15 L5.5 21 L10 15 Z" fill="#8a8a8a"/></svg>
<svg style="position:absolute;left:124px;top:177px;" width="15" height="15" viewBox="0 0 15 15"><path d="M1.5 1.5 L13.5 13.5 M13.5 1.5 L1.5 13.5" stroke="#c4c4c4" stroke-width="1.8"/></svg>
<svg style="position:absolute;left:159px;top:177px;" width="19" height="15" viewBox="0 0 19 15"><path d="M1.5 8 L6.5 13 L17.5 2" stroke="#c9c9c9" stroke-width="2" fill="none"/></svg>
<div style="position:absolute;left:197.50px;top:173.00px;font:italic normal 19px 'Liberation Serif';line-height:normal;white-space:pre;will-change:transform;color:#333;-webkit-text-stroke:0.4px #333;transform:scaleX(1.1875);transform-origin:0 0;">f</div>
<div style="position:absolute;left:205.91px;top:176.69px;font:italic normal 15px 'Liberation Serif';line-height:normal;white-space:pre;will-change:transform;color:#333;-webkit-text-stroke:0.4px #333;transform:scaleX(1.4125);transform-origin:0 0;">x</div>
<div style="position:absolute;left:225px;top:177px;width:1px;height:15px;background:#e0e0e0;"></div>
<svg style="position:absolute;left:1786px;top:180px;" width="9" height="8" viewBox="0 0 9 8"><path d="M0.5 0.5 H8.5 L4.5 7 Z" fill="#3a3a3a"/></svg>
<div style="position:absolute;left:0px;top:204px;width:1800px;height:860px;background:#fff;"></div>
<div style="position:absolute;left:0px;top:204px;width:1800px;height:35px;background:#f8f8f8;"></div>
<div style="position:absolute;left:0px;top:204px;width:35px;height:860px;background:#f8f8f8;"></div>
<div style="position:absolute;left:0px;top:239px;width:1800px;height:1px;background:#c9c9c9;"></div>
<div style="position:absolute;left:0px;top:264px;width:1800px;height:1px;background:#d6d6d6;"></div>
<div style="position:absolute;left:0px;top:289px;width:1800px;height:1px;background:#d6d6d6;"></div>
<div style="position:absolute;left:0px;top:314px;width:1800px;height:1px;background:#d6d6d6;"></div>
<div style="position:absolute;left:0px;top:339px;width:1800px;height:1px;background:#d6d6d6;"></div>
<div style="position:absolute;left:0px;top:364px;width:1800px;height:1px;background:#d6d6d6;"></div>
<div style="position:absolute;left:0px;top:389px;width:1800px;height:1px;background:#d6d6d6;"></div>
<div style="position:absolute;left:0px;top:414px;width:1800px;height:1px;background:#d6d6d6;"></div>
<div style="position:absolute;left:0px;top:439px;width:1800px;height:1px;background:#d6d6d6;"></div>
<div style="position:absolute;left:0px;top:464px;width:1800px;height:1px;background:#d6d6d6;"></div>
<div style="position:absolute;left:0px;top:489px;width:1800px;height:1px;background:#d6d6d6;"></div>
<div style="position:absolute;left:0px;top:514px;width:1800px;height:1px;background:#d6d6d6;"></div>
<div style="position:absolute;left:0px;top:539px;width:1800px;height:1px;background:#d6d6d6;"></div>
<div style="position:absolute;left:0px;top:564px;width:1800px;height:1px;background:#d6d6d6;"></div>
<div style="position:absolute;left:0px;top:589px;width:1800px;height:1px;background:#d6d6d6;"></div>
<div style="position:absolute;left:0px;top:614px;width:1800px;height:1px;background:#d6d6d6;"></div>
<div style="position:absolute;left:0px;top:639px;width:1800px;height:1px;background:#d6d6d6;"></div>
<div style="position:absolute;left:0px;top:664px;width:1800px;height:1px;background:#d6d6d6;"></div>
<div style="position:absolute;left:0px;top:689px;width:1800px;height:1px;background:#d6d6d6;"></div>
<div style="position:absolute;left:0px;top:714px;width:1800px;height:1px;background:#d6d6d6;"></div>
<div style="position:absolute;left:0px;top:739px;width:1800px;height:1px;background:#d6d6d6;"></div>
<div style="position:absolute;left:0px;top:764px;width:1800px;height:1px;background:#d6d6d6;"></div>
<div style="position:absolute;left:0px;top:789px;width:1800px;height:1px;background:#d6d6d6;"></div>
<div style="position:absolute;left:0px;top:814px;width:1800px;height:1px;background:#d6d6d6;"></div>
<div style="position:absolute;left:0px;top:839px;width:1800px;height:1px;background:#d6d6d6;"></div>
<div style="position:absolute;left:0px;top:864px;width:1800px;height:1px;background:#d6d6d6;"></div>
<div style="position:absolute;left:0px;top:889px;width:1800px;height:1px;background:#d6d6d6;"></div>
<div style="position:absolute;left:0px;top:914px;width:1800px;height:1px;background:#d6d6d6;"></div>
<div style="position:absolute;left:0px;top:939px;width:1800px;height:1px;background:#d6d6d6;"></div>
<div style="position:absolute;left:0px;top:964px;width:1800px;height:1px;background:#d6d6d6;"></div>
<div style="position:absolute;left:0px;top:989px;width:1800px;height:1px;background:#d6d6d6;"></div>
<div style="position:absolute;left:0px;top:1014px;width:1800px;height:1px;background:#d6d6d6;"></div>
<div style="position:absolute;left:0px;top:1039px;width:1800px;height:1px;background:#d6d6d6;"></div>
<div style="position:absolute;left:0px;top:1064px;width:1800px;height:1px;background:#d6d6d6;"></div>
<div style="position:absolute;left:35px;top:204px;width:1px;height:860px;background:#bdbdbd;"></div>
<div style="position:absolute;left:245px;top:204px;width:1px;height:35px;background:#e3e3e3;"></div>
<div style="position:absolute;left:245px;top:239px;width:1px;height:825px;background:#d6d6d6;"></div>
<div style="position:absolute;left:414px;top:204px;width:1px;height:35px;background:#e3e3e3;"></div>
<div style="position:absolute;left:414px;top:239px;width:1px;height:825px;background:#d6d6d6;"></div>
<div style="position:absolute;left:630px;top:204px;width:1px;height:35px;background:#e3e3e3;"></div>
<div style="position:absolute;left:630px;top:239px;width:1px;height:825px;background:#d6d6d6;"></div>
<div style="position:absolute;left:775px;top:204px;width:1px;height:35px;background:#e3e3e3;"></div>
<div style="position:absolute;left:775px;top:239px;width:1px;height:825px;background:#d6d6d6;"></div>
<div style="position:absolute;left:881px;top:204px;width:1px;height:35px;background:#e3e3e3;"></div>
<div style="position:absolute;left:881px;top:239px;width:1px;height:825px;background:#d6d6d6;"></div>
<div style="position:absolute;left:968px;top:204px;width:1px;height:35px;background:#e3e3e3;"></div>
<div style="position:absolute;left:968px;top:239px;width:1px;height:825px;background:#d6d6d6;"></div>
<div style="position:absolute;left:1054px;top:204px;width:1px;height:35px;background:#e3e3e3;"></div>
<div style="position:absolute;left:1054px;top:239px;width:1px;height:825px;background:#d6d6d6;"></div>
<div style="position:absolute;left:1140px;top:204px;width:1px;height:35px;background:#e3e3e3;"></div>
<div style="position:absolute;left:1140px;top:239px;width:1px;height:825px;background:#d6d6d6;"></div>
<div style="position:absolute;left:1226px;top:204px;width:1px;height:35px;background:#e3e3e3;"></div>
<div style="position:absolute;left:1226px;top:239px;width:1px;height:825px;background:#d6d6d6;"></div>
<div style="position:absolute;left:1313px;top:204px;width:1px;height:35px;background:#e3e3e3;"></div>
<div style="position:absolute;left:1313px;top:239px;width:1px;height:825px;background:#d6d6d6;"></div>
<div style="position:absolute;left:1399px;top:204px;width:1px;height:35px;background:#e3e3e3;"></div>
<div style="position:absolute;left:1399px;top:239px;width:1px;height:825px;background:#d6d6d6;"></div>
<div style="position:absolute;left:1485px;top:204px;width:1px;height:35px;background:#e3e3e3;"></div>
<div style="position:absolute;left:1485px;top:239px;width:1px;height:825px;background:#d6d6d6;"></div>
<div style="position:absolute;left:1571px;top:204px;width:1px;height:35px;background:#e3e3e3;"></div>
<div style="position:absolute;left:1571px;top:239px;width:1px;height:825px;background:#d6d6d6;"></div>
<div style="position:absolute;left:1658px;top:204px;width:1px;height:35px;background:#e3e3e3;"></div>
<div style="position:absolute;left:1658px;top:239px;width:1px;height:825px;background:#d6d6d6;"></div>
<div style="position:absolute;left:1744px;top:204px;width:1px;height:35px;background:#e3e3e3;"></div>
<div style="position:absolute;left:1744px;top:239px;width:1px;height:825px;background:#d6d6d6;"></div>
<div style="position:absolute;left:1831px;top:204px;width:1px;height:35px;background:#e3e3e3;"></div>
<div style="position:absolute;left:1831px;top:239px;width:1px;height:825px;background:#d6d6d6;"></div>
<div style="position:absolute;left:1572px;top:204px;width:86px;height:35px;background:#ececec;"></div>
<div style="position:absolute;left:1572px;top:237px;width:86px;height:3px;background:#2d7a45;"></div>
<div style="position:absolute;left:136.00px;top:213.49px;font:normal normal 15px 'Liberation Sans';line-height:normal;white-space:pre;will-change:transform;color:#5b5b5b;-webkit-text-stroke:0.3px #5b5b5b;">A</div>
<div style="position:absolute;left:325.00px;top:213.49px;font:normal normal 15px 'Liberation Sans';line-height:normal;white-space:pre;will-change:transform;color:#5b5b5b;-webkit-text-stroke:0.3px #5b5b5b;">B</div>
<div style="position:absolute;left:517.50px;top:213.49px;font:normal normal 15px 'Liberation Sans';line-height:normal;white-space:pre;will-change:transform;color:#5b5b5b;-webkit-text-stroke:0.3px #5b5b5b;">C</div>
<div style="position:absolute;left:697.50px;top:213.49px;font:normal normal 15px 'Liberation Sans';line-height:normal;white-space:pre;will-change:transform;color:#5b5b5b;-webkit-text-stroke:0.3px #5b5b5b;">D</div>
<div style="position:absolute;left:823.50px;top:213.49px;font:normal normal 15px 'Liberation Sans';line-height:normal;white-space:pre;will-change:transform;color:#5b5b5b;-webkit-text-stroke:0.3px #5b5b5b;">E</div>
<div style="position:absolute;left:920.50px;top:213.49px;font:normal normal 15px 'Liberation Sans';line-height:normal;white-space:pre;will-change:transform;color:#5b5b5b;-webkit-text-stroke:0.3px #5b5b5b;">F</div>
<div style="position:absolute;left:1006.50px;top:213.49px;font:normal normal 15px 'Liberation Sans';line-height:normal;white-space:pre;will-change:transform;color:#5b5b5b;-webkit-text-stroke:0.3px #5b5b5b;">G</div>
<div style="position:absolute;left:1092.50px;top:213.49px;font:normal normal 15px 'Liberation Sans';line-height:normal;white-space:pre;will-change:transform;color:#5b5b5b;-webkit-text-stroke:0.3px #5b5b5b;">H</div>
<div style="position:absolute;left:1182.00px;top:213.49px;font:normal normal 15px 'Liberation Sans';line-height:normal;white-space:pre;will-change:transform;color:#5b5b5b;-webkit-text-stroke:0.3px #5b5b5b;">I</div>
<div style="position:absolute;left:1267.00px;top:213.49px;font:normal normal 15px 'Liberation Sans';line-height:normal;white-space:pre;will-change:transform;color:#5b5b5b;-webkit-text-stroke:0.3px #5b5b5b;">J</div>
<div style="position:absolute;left:1351.50px;top:213.49px;font:normal normal 15px 'Liberation Sans';line-height:normal;white-space:pre;will-change:transform;color:#5b5b5b;-webkit-text-stroke:0.3px #5b5b5b;">K</div>
<div style="position:absolute;left:1438.50px;top:213.49px;font:normal normal 15px 'Liberation Sans';line-height:normal;white-space:pre;will-change:transform;color:#5b5b5b;-webkit-text-stroke:0.3px #5b5b5b;">L</div>
<div style="position:absolute;left:1522.50px;top:213.49px;font:normal normal 15px 'Liberation Sans';line-height:normal;white-space:pre;will-change:transform;color:#5b5b5b;-webkit-text-stroke:0.3px #5b5b5b;">M</div>
<div style="position:absolute;left:1610.00px;top:213.49px;font:normal normal 15px 'Liberation Sans';line-height:normal;white-space:pre;will-change:transform;color:#2d7a45;-webkit-text-stroke:0.6px #2d7a45;">N</div>
<div style="position:absolute;left:1696.50px;top:213.49px;font:normal normal 15px 'Liberation Sans';line-height:normal;white-space:pre;will-change:transform;color:#5b5b5b;-webkit-text-stroke:0.3px #5b5b5b;">O</div>
<div style="position:absolute;left:1783.00px;top:213.49px;font:normal normal 15px 'Liberation Sans';line-height:normal;white-space:pre;will-change:transform;color:#5b5b5b;-webkit-text-stroke:0.3px #5b5b5b;">P</div>
<div style="position:absolute;left:13.50px;top:244.32px;font:normal normal 15.5px 'Liberation Sans';line-height:normal;white-space:pre;will-change:transform;color:#4a4a4a;-webkit-text-stroke:0.3px #4a4a4a;">1</div>
<div style="position:absolute;left:14.00px;top:269.32px;font:normal normal 15.5px 'Liberation Sans';line-height:normal;white-space:pre;will-change:transform;color:#4a4a4a;-webkit-text-stroke:0.3px #4a4a4a;">2</div>
<div style="position:absolute;left:14.00px;top:294.32px;font:normal normal 15.5px 'Liberation Sans';line-height:normal;white-space:pre;will-change:transform;color:#4a4a4a;-webkit-text-stroke:0.3px #4a4a4a;">3</div>
<div style="position:absolute;left:13.50px;top:319.32px;font:normal normal 15.5px 'Liberation Sans';line-height:normal;white-space:pre;will-change:transform;color:#4a4a4a;-webkit-text-stroke:0.3px #4a4a4a;">4</div>
<div style="position:absolute;left:14.00px;top:344.32px;font:normal normal 15.5px 'Liberation Sans';line-height:normal;white-space:pre;will-change:transform;color:#4a4a4a;-webkit-text-stroke:0.3px #4a4a4a;">5</div>
<div style="position:absolute;left:14.00px;top:369.32px;font:normal normal 15.5px 'Liberation Sans';line-height:normal;white-space:pre;will-change:transform;color:#4a4a4a;-webkit-text-stroke:0.3px #4a4a4a;">6</div>
<div style="position:absolute;left:14.00px;top:394.32px;font:normal normal 15.5px 'Liberation Sans';line-height:normal;white-space:pre;will-change:transform;color:#4a4a4a;-webkit-text-stroke:0.3px #4a4a4a;">7</div>
<div style="position:absolute;left:14.00px;top:419.32px;font:normal normal 15.5px 'Liberation Sans';line-height:normal;white-space:pre;will-change:transform;color:#4a4a4a;-webkit-text-stroke:0.3px #4a4a4a;">8</div>
<div style="position:absolute;left:14.00px;top:444.32px;font:normal normal 15.5px 'Liberation Sans';line-height:normal;white-space:pre;will-change:transform;color:#4a4a4a;-webkit-text-stroke:0.3px #4a4a4a;">9</div>
<div style="position:absolute;left:8.69px;top:469.32px;font:normal normal 15.5px 'Liberation Sans';line-height:normal;white-space:pre;will-change:transform;color:#4a4a4a;-webkit-text-stroke:0.3px #4a4a4a;">10</div>
<div style="position:absolute;left:9.77px;top:494.32px;font:normal normal 15.5px 'Liberation Sans';line-height:normal;white-space:pre;will-change:transform;color:#4a4a4a;-webkit-text-stroke:0.3px #4a4a4a;">11</div>
<div style="position:absolute;left:9.19px;top:519.32px;font:normal normal 15.5px 'Liberation Sans';line-height:normal;white-space:pre;will-change:transform;color:#4a4a4a;-webkit-text-stroke:0.3px #4a4a4a;">12</div>
<div style="position:absolute;left:9.19px;top:544.32px;font:normal normal 15.5px 'Liberation Sans';line-height:normal;white-space:pre;will-change:transform;color:#4a4a4a;-webkit-text-stroke:0.3px #4a4a4a;">13</div>
<div style="position:absolute;left:8.69px;top:569.32px;font:normal normal 15.5px 'Liberation Sans';line-height:normal;white-space:pre;will-change:transform;color:#4a4a4a;-webkit-text-stroke:0.3px #4a4a4a;">14</div>
<div style="position:absolute;left:9.19px;top:594.32px;font:normal normal 15.5px 'Liberation Sans';line-height:normal;white-space:pre;will-change:transform;color:#4a4a4a;-webkit-text-stroke:0.3px #4a4a4a;">15</div>
<div style="position:absolute;left:9.19px;top:619.32px;font:normal normal 15.5px 'Liberation Sans';line-height:normal;white-space:pre;will-change:transform;color:#4a4a4a;-webkit-text-stroke:0.3px #4a4a4a;">16</div>
<div style="position:absolute;left:9.19px;top:644.32px;font:normal normal 15.5px 'Liberation Sans';line-height:normal;white-space:pre;will-change:transform;color:#4a4a4a;-webkit-text-stroke:0.3px #4a4a4a;">17</div>
<div style="position:absolute;left:9.19px;top:669.32px;font:normal normal 15.5px 'Liberation Sans';line-height:normal;white-space:pre;will-change:transform;color:#4a4a4a;-webkit-text-stroke:0.3px #4a4a4a;">18</div>
<div style="position:absolute;left:9.19px;top:694.32px;font:normal normal 15.5px 'Liberation Sans';line-height:normal;white-space:pre;will-change:transform;color:#4a4a4a;-webkit-text-stroke:0.3px #4a4a4a;">19</div>
<div style="position:absolute;left:9.19px;top:719.32px;font:normal normal 15.5px 'Liberation Sans';line-height:normal;white-space:pre;will-change:transform;color:#4a4a4a;-webkit-text-stroke:0.3px #4a4a4a;">20</div>
<div style="position:absolute;left:9.69px;top:744.32px;font:normal normal 15.5px 'Liberation Sans';line-height:normal;white-space:pre;will-change:transform;color:#4a4a4a;-webkit-text-stroke:0.3px #4a4a4a;">21</div>
<div style="position:absolute;left:9.69px;top:769.32px;font:normal normal 15.5px 'Liberation Sans';line-height:normal;white-space:pre;will-change:transform;color:#4a4a4a;-webkit-text-stroke:0.3px #4a4a4a;">22</div>
<div style="position:absolute;left:9.69px;top:794.32px;font:normal normal 15.5px 'Liberation Sans';line-height:normal;white-space:pre;will-change:transform;color:#4a4a4a;-webkit-text-stroke:0.3px #4a4a4a;">23</div>
<div style="position:absolute;left:9.19px;top:819.32px;font:normal normal 15.5px 'Liberation Sans';line-height:normal;white-space:pre;will-change:transform;color:#4a4a4a;-webkit-text-stroke:0.3px #4a4a4a;">24</div>
<div style="position:absolute;left:9.69px;top:844.32px;font:normal normal 15.5px 'Liberation Sans';line-height:normal;white-space:pre;will-change:transform;color:#4a4a4a;-webkit-text-stroke:0.3px #4a4a4a;">25</div>
<div style="position:absolute;left:9.69px;top:869.32px;font:normal normal 15.5px 'Liberation Sans';line-height:normal;white-space:pre;will-change:transform;color:#4a4a4a;-webkit-text-stroke:0.3px #4a4a4a;">26</div>
<div style="position:absolute;left:9.69px;top:894.32px;font:normal normal 15.5px 'Liberation Sans';line-height:normal;white-space:pre;will-change:transform;color:#4a4a4a;-webkit-text-stroke:0.3px #4a4a4a;">27</div>
<div style="position:absolute;left:9.69px;top:919.32px;font:normal normal 15.5px 'Liberation Sans';line-height:normal;white-space:pre;will-change:transform;color:#4a4a4a;-webkit-text-stroke:0.3px #4a4a4a;">28</div>
<div style="position:absolute;left:9.69px;top:944.32px;font:normal normal 15.5px 'Liberation Sans';line-height:normal;white-space:pre;will-change:transform;color:#4a4a4a;-webkit-text-stroke:0.3px #4a4a4a;">29</div>
<div style="position:absolute;left:9.19px;top:969.32px;font:normal normal 15.5px 'Liberation Sans';line-height:normal;white-space:pre;will-change:transform;color:#4a4a4a;-webkit-text-stroke:0.3px #4a4a4a;">30</div>
<div style="position:absolute;left:9.69px;top:994.32px;font:normal normal 15.5px 'Liberation Sans';line-height:normal;white-space:pre;will-change:transform;color:#4a4a4a;-webkit-text-stroke:0.3px #4a4a4a;">31</div>
<div style="position:absolute;left:9.69px;top:1019.32px;font:normal normal 15.5px 'Liberation Sans';line-height:normal;white-space:pre;will-change:transform;color:#4a4a4a;-webkit-text-stroke:0.3px #4a4a4a;">32</div>
<div style="position:absolute;left:9.69px;top:1044.32px;font:normal normal 15.5px 'Liberation Sans';line-height:normal;white-space:pre;will-change:transform;color:#4a4a4a;-webkit-text-stroke:0.3px #4a4a4a;">33</div>
<svg style="position:absolute;left:4px;top:210px;" width="30" height="27" viewBox="0 0 30 27"><path d="M28 2 V26 H3 Z" fill="#dcdcdc"/></svg>
<div style="position:absolute;left:245px;top:239px;width:1px;height:25px;background:#1a1a1a;"></div>
<div style="position:absolute;left:414px;top:239px;width:1px;height:25px;background:#1a1a1a;"></div>
<div style="position:absolute;left:630px;top:239px;width:1px;height:25px;background:#1a1a1a;"></div>
<div style="position:absolute;left:775px;top:239px;width:1px;height:25px;background:#1a1a1a;"></div>
<div style="position:absolute;left:881px;top:239px;width:1px;height:25px;background:#1a1a1a;"></div>
<div style="position:absolute;left:36px;top:264px;width:846px;height:1.3px;background:#1a1a1a;"></div>
<div style="position:absolute;left:78.00px;top:242.10px;font:normal bold 16.4px 'Liberation Sans';line-height:normal;white-space:pre;will-change:transform;color:#000;-webkit-text-stroke:0.15px #000;transform:scaleX(0.9510);transform-origin:0 0;">Transaction Date</div>
<div style="position:absolute;left:266.70px;top:242.10px;font:normal bold 16.4px 'Liberation Sans';line-height:normal;white-space:pre;will-change:transform;color:#000;-webkit-text-stroke:0.15px #000;transform:scaleX(0.9485);transform-origin:0 0;">Transaction Type</div>
<div style="position:absolute;left:446.86px;top:242.10px;font:normal bold 16.4px 'Liberation Sans';line-height:normal;white-space:pre;will-change:transform;color:#000;-webkit-text-stroke:0.15px #000;transform:scaleX(0.9408);transform-origin:0 0;">Involved Companies</div>
<div style="position:absolute;left:638.30px;top:242.10px;font:normal bold 16.4px 'Liberation Sans';line-height:normal;white-space:pre;will-change:transform;color:#000;-webkit-text-stroke:0.15px #000;transform:scaleX(0.9414);transform-origin:0 0;">Transaction Value</div>
<div style="position:absolute;left:805.00px;top:242.10px;font:normal bold 16.4px 'Liberation Sans';line-height:normal;white-space:pre;will-change:transform;color:#000;-webkit-text-stroke:0.15px #000;transform:scaleX(0.9141);transform-origin:0 0;">Sector</div>
<div style="position:absolute;left:97.00px;top:269.30px;font:normal normal 16.4px 'Liberation Sans';line-height:normal;white-space:pre;will-change:transform;color:#000;-webkit-text-stroke:0.3px #000;transform:scaleX(0.9534);transform-origin:0 0;">2023-01-15 00:00:00</div>
<div style="position:absolute;left:248.30px;top:269.30px;font:normal normal 16.4px 'Liberation Sans';line-height:normal;white-space:pre;will-change:transform;color:#000;-webkit-text-stroke:0.3px #000;">M&amp;A</div>
<div style="position:absolute;left:418.00px;top:269.30px;font:normal normal 16.4px 'Liberation Sans';line-height:normal;white-space:pre;will-change:transform;color:#000;-webkit-text-stroke:0.3px #000;transform:scaleX(0.9212);transform-origin:0 0;">Company A &amp; Company B</div>
<div style="position:absolute;left:720.00px;top:269.30px;font:normal normal 16.4px 'Liberation Sans';line-height:normal;white-space:pre;will-change:transform;color:#000;-webkit-text-stroke:0.3px #000;transform:scaleX(0.9473);transform-origin:0 0;">500000</div>
<div style="position:absolute;left:779.20px;top:269.30px;font:normal normal 16.4px 'Liberation Sans';line-height:normal;white-space:pre;will-change:transform;color:#000;-webkit-text-stroke:0.3px #000;transform:scaleX(0.9506);transform-origin:0 0;">Tech</div>
<div style="position:absolute;left:97.00px;top:294.30px;font:normal normal 16.4px 'Liberation Sans';line-height:normal;white-space:pre;will-change:transform;color:#000;-webkit-text-stroke:0.3px #000;transform:scaleX(0.9534);transform-origin:0 0;">2023-03-22 00:00:00</div>
<div style="position:absolute;left:248.37px;top:294.30px;font:normal normal 16.4px 'Liberation Sans';line-height:normal;white-space:pre;will-change:transform;color:#000;-webkit-text-stroke:0.3px #000;transform:scaleX(0.9250);transform-origin:0 0;">IPO</div>
<div style="position:absolute;left:418.00px;top:294.30px;font:normal normal 16.4px 'Liberation Sans';line-height:normal;white-space:pre;will-change:transform;color:#000;-webkit-text-stroke:0.3px #000;transform:scaleX(0.8973);transform-origin:0 0;">Company C</div>
<div style="position:absolute;left:720.00px;top:294.30px;font:normal normal 16.4px 'Liberation Sans';line-height:normal;white-space:pre;will-change:transform;color:#000;-webkit-text-stroke:0.3px #000;transform:scaleX(0.9473);transform-origin:0 0;">300000</div>
<div style="position:absolute;left:778.21px;top:294.30px;font:normal normal 16.4px 'Liberation Sans';line-height:normal;white-space:pre;will-change:transform;color:#000;-webkit-text-stroke:0.3px #000;transform:scaleX(0.9879);transform-origin:0 0;">Healthcare</div>
<div style="position:absolute;left:97.00px;top:319.30px;font:normal normal 16.4px 'Liberation Sans';line-height:normal;white-space:pre;will-change:transform;color:#000;-webkit-text-stroke:0.3px #000;transform:scaleX(0.9534);transform-origin:0 0;">2023-02-05 00:00:00</div>
<div style="position:absolute;left:248.30px;top:319.30px;font:normal normal 16.4px 'Liberation Sans';line-height:normal;white-space:pre;will-change:transform;color:#000;-webkit-text-stroke:0.3px #000;">M&amp;A</div>
<div style="position:absolute;left:418.00px;top:319.30px;font:normal normal 16.4px 'Liberation Sans';line-height:normal;white-space:pre;will-change:transform;color:#000;-webkit-text-stroke:0.3px #000;transform:scaleX(0.9101);transform-origin:0 0;">Company C &amp; Company D</div>
<div style="position:absolute;left:720.00px;top:319.30px;font:normal normal 16.4px 'Liberation Sans';line-height:normal;white-space:pre;will-change:transform;color:#000;-webkit-text-stroke:0.3px #000;transform:scaleX(0.9473);transform-origin:0 0;">400000</div>
<div style="position:absolute;left:779.20px;top:319.30px;font:normal normal 16.4px 'Liberation Sans';line-height:normal;white-space:pre;will-change:transform;color:#000;-webkit-text-stroke:0.3px #000;transform:scaleX(0.9506);transform-origin:0 0;">Tech</div>
<div style="position:absolute;left:97.00px;top:344.30px;font:normal normal 16.4px 'Liberation Sans';line-height:normal;white-space:pre;will-change:transform;color:#000;-webkit-text-stroke:0.3px #000;transform:scaleX(0.9534);transform-origin:0 0;">2023-04-10 00:00:00</div>
<div style="position:absolute;left:248.37px;top:344.30px;font:normal normal 16.4px 'Liberation Sans';line-height:normal;white-space:pre;will-change:transform;color:#000;-webkit-text-stroke:0.3px #000;transform:scaleX(0.9250);transform-origin:0 0;">IPO</div>
<div style="position:absolute;left:418.00px;top:344.30px;font:normal normal 16.4px 'Liberation Sans';line-height:normal;white-space:pre;will-change:transform;color:#000;-webkit-text-stroke:0.3px #000;transform:scaleX(0.9078);transform-origin:0 0;">Company A</div>
<div style="position:absolute;left:720.00px;top:344.30px;font:normal normal 16.4px 'Liberation Sans';line-height:normal;white-space:pre;will-change:transform;color:#000;-webkit-text-stroke:0.3px #000;transform:scaleX(0.9473);transform-origin:0 0;">600000</div>
<div style="position:absolute;left:778.28px;top:344.30px;font:normal normal 16.4px 'Liberation Sans';line-height:normal;white-space:pre;will-change:transform;color:#000;-webkit-text-stroke:0.3px #000;transform:scaleX(0.9231);transform-origin:0 0;">Finance</div>
<div style="position:absolute;left:0px;top:1064px;width:1800px;height:32px;background:#efefef;"></div>
<div style="position:absolute;left:0px;top:1064px;width:1800px;height:1px;background:#cdcdcd;"></div>
<svg style="position:absolute;left:17px;top:1073px;" width="12" height="15" viewBox="0 0 12 15"><path d="M10 1 V14 L2 7.5 Z" fill="#b3b3b3"/></svg>
<svg style="position:absolute;left:46px;top:1073px;" width="12" height="15" viewBox="0 0 12 15"><path d="M2 1 V14 L10 7.5 Z" fill="#b3b3b3"/></svg>
<div style="position:absolute;left:75px;top:1067px;width:1px;height:26px;background:#d6d6d6;"></div>
<div style="position:absolute;left:240px;top:1067px;width:1px;height:26px;background:#d6d6d6;"></div>
<div style="position:absolute;left:432px;top:1064px;width:200px;height:28px;background:linear-gradient(#f8f8f8,#f3f3f3);border-left:1px solid #d0d0d0;box-shadow:0 1px 1.5px rgba(0,0,0,0.22);"></div>
<div style="position:absolute;left:789px;top:1067px;width:1px;height:26px;background:#d6d6d6;"></div>
<div style="position:absolute;left:836px;top:1067px;width:1px;height:26px;background:#d6d6d6;"></div>
<div style="position:absolute;left:98.65px;top:1071.09px;font:normal normal 15px 'Liberation Sans';line-height:normal;white-space:pre;will-change:transform;color:#555;-webkit-text-stroke:0.3px #555;transform:scaleX(1.0493);transform-origin:0 0;">Financial Metrics</div>
<div style="position:absolute;left:265.00px;top:1071.09px;font:normal normal 15px 'Liberation Sans';line-height:normal;white-space:pre;will-change:transform;color:#555;-webkit-text-stroke:0.3px #555;transform:scaleX(1.0358);transform-origin:0 0;">Company Valuations</div>
<div style="position:absolute;left:456.80px;top:1071.09px;font:normal bold 15px 'Liberation Sans';line-height:normal;white-space:pre;will-change:transform;color:#3d8051;-webkit-text-stroke:0.15px #3d8051;transform:scaleX(0.9908);transform-origin:0 0;">Transaction Histories</div>
<div style="position:absolute;left:655.15px;top:1071.09px;font:normal normal 15px 'Liberation Sans';line-height:normal;white-space:pre;will-change:transform;color:#555;-webkit-text-stroke:0.3px #555;transform:scaleX(1.0521);transform-origin:0 0;">Market Analysis</div>
<svg style="position:absolute;left:806px;top:1073px;" width="15" height="15" viewBox="0 0 15 15"><path d="M7.5 1 V14 M1 7.5 H14" stroke="#4a4a4a" stroke-width="2.6"/></svg>
<div style="position:absolute;left:0px;top:1096px;width:1800px;height:29px;background:linear-gradient(#e6e6e6,#d9d9d9);"></div>
<div style="position:absolute;left:0px;top:1096px;width:1800px;height:1px;background:#b2b2b2;"></div>
<div style="position:absolute;left:30.01px;top:1102.18px;font:normal normal 15px 'Liberation Sans';line-height:normal;white-space:pre;will-change:transform;color:#555;-webkit-text-stroke:0.3px #555;transform:scaleX(0.9893);transform-origin:0 0;">Ready</div>
<svg style="position:absolute;left:97px;top:1100px;" width="23" height="21" viewBox="0 0 23 21"><circle cx="9" cy="3.5" r="2.6" fill="none" stroke="#777" stroke-width="1.4"/><path d="M2 7 C5 9 13 9 16 7 M9 8.5 V13 L5 19 M9 13 L11 16" fill="none" stroke="#777" stroke-width="1.4"/><path d="M12 16 L15 19 L21 12" fill="none" stroke="#777" stroke-width="1.5"/></svg>
<div style="position:absolute;left:121.70px;top:1102.18px;font:normal normal 15px 'Liberation Sans';line-height:normal;white-space:pre;will-change:transform;color:#555;-webkit-text-stroke:0.3px #555;transform:scaleX(1.0634);transform-origin:0 0;">Accessibility: Good to go</div>
<div style="position:absolute;left:1402px;top:1097px;width:45px;height:28px;background:#b9b9b9;"></div>
<svg style="position:absolute;left:1415px;top:1102px;" width="19" height="18" viewBox="0 0 19 18"><rect x="1" y="1" width="4" height="4" fill="#fff"/><rect x="1" y="7" width="4" height="4" fill="#fff"/><rect x="1" y="13" width="4" height="4" fill="#fff"/><rect x="7" y="1" width="4" height="4" fill="#fff"/><rect x="7" y="7" width="4" height="4" fill="#fff"/><rect x="7" y="13" width="4" height="4" fill="#fff"/><rect x="13" y="1" width="4" height="4" fill="#fff"/><rect x="13" y="7" width="4" height="4" fill="#fff"/><rect x="13" y="13" width="4" height="4" fill="#fff"/></svg>
<svg style="position:absolute;left:1459px;top:1101px;" width="21" height="19" viewBox="0 0 21 19"><rect x="1" y="1" width="18" height="17" fill="none" stroke="#707070" stroke-width="1.4"/><rect x="5" y="4" width="10" height="11" fill="none" stroke="#707070" stroke-width="1.2"/><path d="M7 7 H13 M7 9.5 H13 M7 12 H13" stroke="#707070" stroke-width="1"/></svg>
<svg style="position:absolute;left:1503px;top:1101px;" width="21" height="19" viewBox="0 0 21 19"><path d="M1 1 H19 V18 H1 Z M7 1 V9 H13 V1" fill="none" stroke="#707070" stroke-width="1.4"/></svg>
<div style="position:absolute;left:1545px;top:1109px;width:11px;height:3px;background:#6a6a6a;"></div>
<div style="position:absolute;left:1565px;top:1108.5px;width:125px;height:4.5px;background:#a9a9a9;border-radius:3px;"></div>
<div style="position:absolute;left:1621.5px;top:1100.5px;width:20px;height:20px;background:#fff;border-radius:50%;box-shadow:0 0.5px 2px rgba(0,0,0,0.35);"></div>
<svg style="position:absolute;left:1697px;top:1104px;" width="13" height="13" viewBox="0 0 13 13"><path d="M6.5 1 V12 M1 6.5 H12" stroke="#6a6a6a" stroke-width="2.4"/></svg>
<div style="position:absolute;left:1728.94px;top:1102.18px;font:normal normal 15px 'Liberation Sans';line-height:normal;white-space:pre;will-change:transform;color:#555;-webkit-text-stroke:0.3px #555;transform:scaleX(1.0614);transform-origin:0 0;">130%</div>
<div style="position:absolute;left:456px;top:621px;width:483px;height:438px;background:#efecea;border-radius:10px;box-shadow:0 0 0 0.5px rgba(0,0,0,0.22),0 12px 34px rgba(0,0,0,0.30);"></div>
<div style="position:absolute;left:457px;top:656px;width:481px;height:1px;background:#d9d6d3;"></div>
<div style="position:absolute;left:642.20px;top:628.40px;font:normal bold 16.4px 'Liberation Sans';line-height:normal;white-space:pre;will-change:transform;color:#3a3a3a;-webkit-text-stroke:0.15px #3a3a3a;">Move or Copy</div>
<div style="position:absolute;left:481.90px;top:682.99px;font:normal normal 16.3px 'Liberation Sans';line-height:normal;white-space:pre;will-change:transform;color:#2b2b2b;-webkit-text-stroke:0.3px #2b2b2b;transform:scaleX(1.0422);transform-origin:0 0;">To book:</div>
<div style="position:absolute;left:481px;top:711px;width:432px;height:25.5px;background:#fff;border-radius:5px;box-shadow:0 0.5px 1.5px rgba(0,0,0,0.28),0 0 0 0.5px rgba(0,0,0,0.06);"></div>
<div style="position:absolute;left:490.99px;top:713.49px;font:normal normal 16.3px 'Liberation Sans';line-height:normal;white-space:pre;will-change:transform;color:#2b2b2b;-webkit-text-stroke:0.3px #2b2b2b;transform:scaleX(1.0109);transform-origin:0 0;">Book4</div>
<div style="position:absolute;left:890.5px;top:714px;width:20.5px;height:20px;background:linear-gradient(#4a9462,#32764a);border-radius:4px;"></div>
<svg style="position:absolute;left:890.5px;top:714px;" width="21" height="20" viewBox="0 0 21 20"><path d="M6.5 8 L10.5 4.5 L14.5 8 M6.5 12 L10.5 15.5 L14.5 12" stroke="#fff" stroke-width="1.8" fill="none" stroke-linecap="round" stroke-linejoin="round"/></svg>
<div style="position:absolute;left:480.96px;top:747.59px;font:normal normal 16.3px 'Liberation Sans';line-height:normal;white-space:pre;will-change:transform;color:#2b2b2b;-webkit-text-stroke:0.3px #2b2b2b;transform:scaleX(1.0438);transform-origin:0 0;">Before sheet:</div>
<div style="position:absolute;left:477.5px;top:773px;width:439.5px;height:180px;background:#8db08f;border-radius:3px;"></div>
<div style="position:absolute;left:482.5px;top:778px;width:429.5px;height:170px;background:#fff;"></div>
<div style="position:absolute;left:482.5px;top:778px;width:429.5px;height:22.5px;background:#2c6736;"></div>
<div style="position:absolute;left:492.50px;top:779.99px;font:normal normal 16.3px 'Liberation Sans';line-height:normal;white-space:pre;will-change:transform;color:#e8f6ea;-webkit-text-stroke:0.3px #e8f6ea;transform:scaleX(0.9758);transform-origin:0 0;">Sheet1</div>
<div style="position:absolute;left:492.66px;top:802.99px;font:normal normal 16.3px 'Liberation Sans';line-height:normal;white-space:pre;will-change:transform;color:#2b2b2b;-webkit-text-stroke:0.3px #2b2b2b;transform:scaleX(1.0381);transform-origin:0 0;">(move to end)</div>
<div style="position:absolute;left:482px;top:971px;width:16px;height:16px;background:#fff;border-radius:3.5px;box-shadow:0 0 0 0.5px rgba(0,0,0,0.18),0 0.5px 1px rgba(0,0,0,0.15);"></div>
<div style="position:absolute;left:507.00px;top:969.99px;font:normal normal 16.3px 'Liberation Sans';line-height:normal;white-space:pre;will-change:transform;color:#2b2b2b;-webkit-text-stroke:0.3px #2b2b2b;transform:scaleX(1.0115);transform-origin:0 0;">Create a copy</div>
<div style="position:absolute;left:743.7px;top:1008.7px;width:77px;height:25.7px;background:#fff;border-radius:6px;box-shadow:0 0.5px 1.5px rgba(0,0,0,0.3),0 0 0 0.5px rgba(0,0,0,0.08);"></div>
<div style="position:absolute;left:756.90px;top:1010.79px;font:normal normal 16.3px 'Liberation Sans';line-height:normal;white-space:pre;will-change:transform;color:#2b2b2b;-webkit-text-stroke:0.3px #2b2b2b;transform:scaleX(1.0147);transform-origin:0 0;">Cancel</div>
<div style="position:absolute;left:826px;top:997px;width:101px;height:51px;box-sizing:border-box;border:4.5px solid #82e0ab;"></div>
<div style="position:absolute;left:836px;top:1008.7px;width:77.5px;height:25.2px;background:linear-gradient(#3f8a59,#2d6e43);border-radius:6px;box-shadow:0 0.5px 1px rgba(0,0,0,0.3);"></div>
<div style="position:absolute;left:863.80px;top:1010.79px;font:normal normal 16.3px 'Liberation Sans';line-height:normal;white-space:pre;will-change:transform;color:#f2fbf4;-webkit-text-stroke:0.3px #f2fbf4;transform:scaleX(0.9339);transform-origin:0 0;">OK</div>
</body></html>
